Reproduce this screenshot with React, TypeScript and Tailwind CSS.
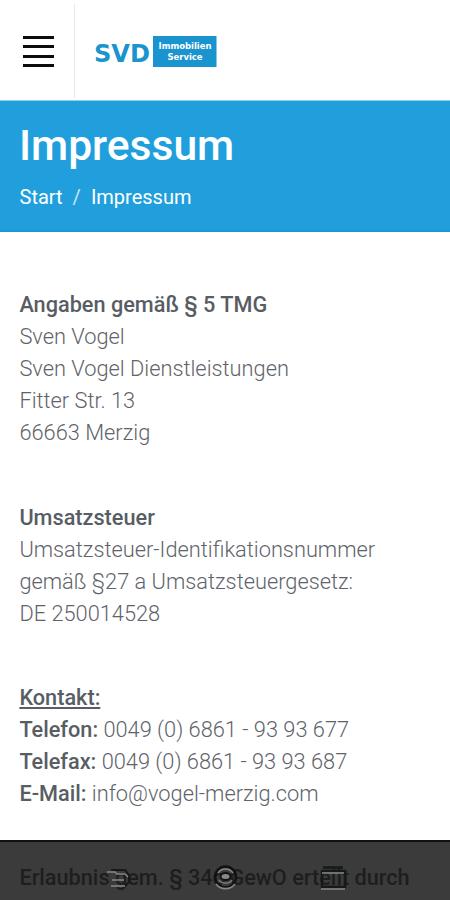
import type { ReactNode } from "react";

function Line({ children }: { children: ReactNode }) {
  return <p className="whitespace-nowrap">{children}</p>;
}

export default function App() {
  return (
    <div className="relative h-[900px] w-[450px] overflow-hidden bg-white font-['Roboto',sans-serif] text-[#5f646b]">
      <header className="flex h-[100px] items-center">
        <button aria-label="Menü" className="ml-[23px] mt-[3px] flex w-[31px] flex-col gap-[6.3px]">
          <span className="h-[3px] bg-[#0c0c0c]" />
          <span className="h-[3px] bg-[#0c0c0c]" />
          <span className="h-[3px] bg-[#0c0c0c]" />
          <span className="h-[3px] bg-[#0c0c0c]" />
        </button>
        <div className="ml-5 mt-px h-[94px] w-px bg-[#e8e8e8]" />
        <svg className="ml-[19px] mt-[3px]" width="124" height="34" viewBox="0 0 124 34">
          <text x="0" y="27" textLength="56" lengthAdjust="spacingAndGlyphs" fill="#1a94cf" fontFamily="DejaVu Sans" fontWeight="700" fontSize="24.5">SVD</text>
          <rect x="59" y="1" width="63.500" height="31" fill="#1a94cf" />
          <g fill="#fff" fontFamily="DejaVu Sans" fontWeight="700" fontSize="8">
            <text x="64.500" y="14" textLength="53" lengthAdjust="spacingAndGlyphs">Immobilien</text>
            <text x="73.500" y="25" textLength="35" lengthAdjust="spacingAndGlyphs">Service</text>
          </g>
        </svg>
      </header>
      <section className="h-[132px] border-t border-b-2 border-t-[#8fd0ee] border-b-[#1a96d3] bg-[#209fdc] pl-[19px] pt-[19px] text-white">
        <h1 className="text-[42.6px] font-medium leading-[50px]">Impressum</h1>
        <nav className="ml-[0.5px] mt-[15px] flex text-[20px] leading-6">
          <span>Start</span>
          <span className="mx-[10px] opacity-75">/</span>
          <span>Impressum</span>
        </nav>
      </section>
      <main className="flex flex-col gap-[52.5px] px-[19.4px] pt-[57px] text-[21.8px] font-light leading-[32px] [&_b]:text-[21.7px] [&_b]:font-medium [&_b]:text-[#585d64]">
        <section>
          <Line><b>Angaben gemäß § 5 TMG</b></Line>
          <Line>Sven Vogel</Line>
          <Line>Sven Vogel Dienstleistungen</Line>
          <Line>Fitter Str. 13</Line>
          <Line>66663 Merzig</Line>
        </section>
        <section>
          <Line><b>Umsatzsteuer</b></Line>
          <Line>Umsatzsteuer-Identifikationsnummer</Line>
          <Line>gemäß §27 a Umsatzsteuergesetz:</Line>
          <Line>DE 250014528</Line>
        </section>
        <section>
          <Line><b className="underline">Kontakt:</b></Line>
          <Line><b>Telefon:</b> 0049 (0) 6861 - 93 93 677</Line>
          <Line><b>Telefax:</b> 0049 (0) 6861 - 93 93 687</Line>
          <Line><b>E-Mail:</b> info@vogel-merzig.com</Line>
        </section>
      </main>
      <footer className="absolute inset-x-0 top-[840px] h-[60px] border-t-2 border-[#111] bg-[#3b3b3b]">
        <p className="ml-[19.4px] mt-5 whitespace-nowrap text-[21.7px] font-medium leading-[32px] text-[#1c1e1f]">Erlaubnis gem. § 34c GewO erteilt durch</p>
        <svg className="absolute left-0 top-0" width="450" height="58" fill="none">
          <path d="M111 28h14l4 5v7l-4 4" stroke="#171819" strokeWidth="2" />
          <path d="M107 30h8l2 2h8l3 3M112 38h12M111 44h14" stroke="#888" strokeWidth="1.300" />
          <circle cx="225.500" cy="35" r="10.500" stroke="#111" strokeWidth="2.500" />
          <path d="M218 31a9 9 0 0 1 15 0M216 42a12 12 0 0 0 19 0" stroke="#888" strokeWidth="1.600" />
          <ellipse cx="225.500" cy="34.500" rx="5" ry="3.500" fill="#888" stroke="#111" strokeWidth="2" />
          <path d="M219 38a7 5 0 0 0 13 0" stroke="#888" strokeWidth="1.300" />
          <path d="M323 25.500h20M321 29h24M322 29v16h23V29" stroke="#171819" strokeWidth="2.500" />
          <path d="M322 31h22M321 47h24" stroke="#888" strokeWidth="1.600" />
        </svg>
      </footer>
    </div>
  );
}
